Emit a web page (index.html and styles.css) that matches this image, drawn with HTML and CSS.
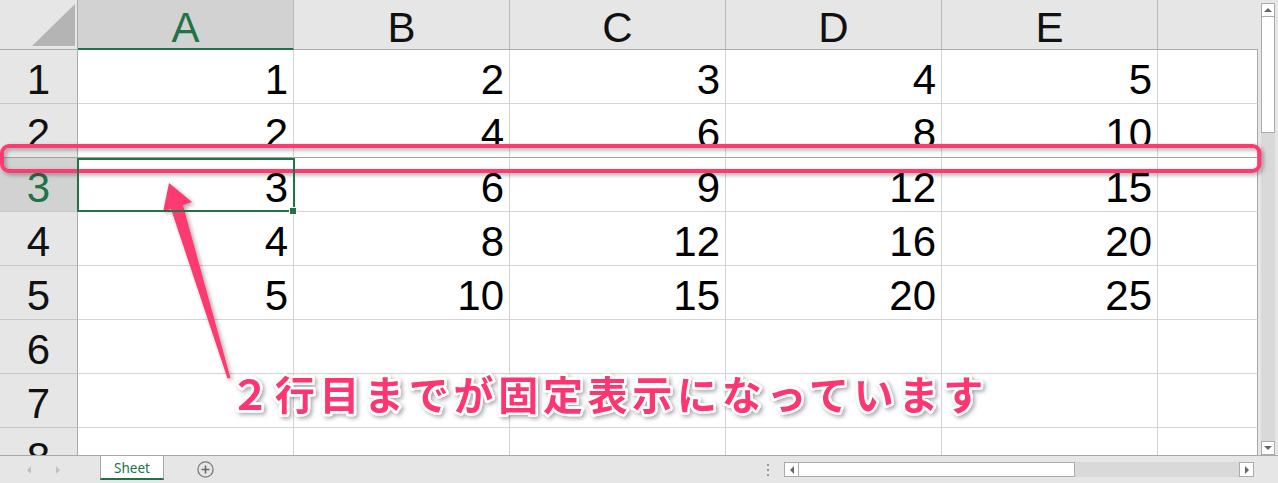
FILE: index.html
```html
<!DOCTYPE html>
<html lang="ja">
<head>
<meta charset="utf-8">
<title>Sheet</title>
<link rel="stylesheet" href="styles.css">
</head>
<body>
<div class="app">
  <div class="main">
    <div class="sheet">
      <div class="corner"><svg width="78" height="50" viewBox="0 0 78 50"><polygon points="32,46 75,46 75,4" fill="#b4b4b4"/></svg></div>
      <div class="ch sel">A</div>
      <div class="ch">B</div>
      <div class="ch">C</div>
      <div class="ch">D</div>
      <div class="ch">E</div>
      <div class="ch last"></div>

      <div class="rh">1</div>
      <div class="c">1</div><div class="c">2</div><div class="c">3</div><div class="c">4</div><div class="c">5</div><div class="c edge"></div>

      <div class="rh frz">2</div>
      <div class="c frz">2</div><div class="c frz">4</div><div class="c frz">6</div><div class="c frz">8</div><div class="c frz">10</div><div class="c edge frz"></div>

      <div class="rh sel">3</div>
      <div class="c active">3</div><div class="c">6</div><div class="c">9</div><div class="c">12</div><div class="c">15</div><div class="c edge"></div>

      <div class="rh">4</div>
      <div class="c">4</div><div class="c">8</div><div class="c">12</div><div class="c">16</div><div class="c">20</div><div class="c edge"></div>

      <div class="rh">5</div>
      <div class="c">5</div><div class="c">10</div><div class="c">15</div><div class="c">20</div><div class="c">25</div><div class="c edge"></div>

      <div class="rh">6</div>
      <div class="c"></div><div class="c"></div><div class="c"></div><div class="c"></div><div class="c"></div><div class="c edge"></div>

      <div class="rh">7</div>
      <div class="c"></div><div class="c"></div><div class="c"></div><div class="c"></div><div class="c"></div><div class="c edge"></div>

      <div class="rh">8</div>
      <div class="c"></div><div class="c"></div><div class="c"></div><div class="c"></div><div class="c"></div><div class="c edge"></div>
    </div>
    <div class="vscroll">
      <div class="vbtn"><span class="tri-up"></span></div>
      <div class="vthumb"></div>
      <div class="vtrack"></div>
      <div class="vbtn"><span class="tri-down"></span></div>
    </div>
  </div>
  <div class="tabbar">
    <div class="tabnav"><span class="nav-l"></span><span class="nav-r"></span></div>
    <div class="tab">Sheet</div>
    <div class="addsheet">
      <svg width="17" height="17" viewBox="0 0 17 17"><circle cx="8.5" cy="8.5" r="7.6" fill="none" stroke="#7a7a7a" stroke-width="1.3"/><path d="M8.5 4.5v8M4.5 8.5h8" stroke="#6a6a6a" stroke-width="1.6"/></svg>
    </div>
    <div class="spacer"></div>
    <div class="grip"><i></i><i></i><i></i></div>
    <div class="hscroll">
      <div class="hbtn"><span class="tri-left"></span></div>
      <div class="hthumb"></div>
      <div class="htrack"></div>
      <div class="hbtn"><span class="tri-right"></span></div>
    </div>
  </div>
</div>

<svg class="annot" width="1278" height="483" viewBox="0 0 1278 483">
  <defs>
    <filter id="sh" filterUnits="userSpaceOnUse" x="0" y="0" width="1278" height="483">
      <feDropShadow dx="2" dy="2" stdDeviation="2" flood-color="#000" flood-opacity="0.35"/>
    </filter>
  </defs>
  <rect class="frame" x="2" y="146" width="1257.5" height="25" rx="7" filter="url(#sh)"/>
  <polygon class="arrow" points="169,183 192,202 183,205.2 230.5,378 227.5,378.6 171,209 163,212" filter="url(#sh)"/>
  <text class="note" x="230" y="410" filter="url(#sh)">２行目までが固定表示になっています</text>
</svg>
</body>
</html>
```

FILE: styles.css
```css
* { box-sizing: border-box; }
html, body { margin: 0; padding: 0; }
body {
  width: 1278px;
  height: 483px;
  overflow: hidden;
  background: #e6e6e6;
  font-family: "Liberation Sans", Arial, sans-serif;
  position: relative;
}
.app { display: flex; flex-direction: column; height: 483px; }
.main { display: flex; height: 455px; }

.sheet {
  width: 1258px;
  height: 455px;
  overflow: hidden;
  background: #fff;
  display: grid;
  grid-template-columns: 78px repeat(5, 216px) 100px;
  grid-template-rows: 50px repeat(8, 54px);
}
.corner {
  background: #e6e6e6;
  border-right: 1px solid #ababab;
  border-bottom: 1px solid #ababab;
  overflow: hidden;
}
.corner svg { display: block; }
.ch {
  background: #e6e6e6;
  border-right: 1px solid #b9b9b9;
  border-bottom: 1px solid #ababab;
  font-size: 42px;
  line-height: 42px;
  padding-top: 7px;
  text-align: center;
  color: #111;
}
.ch.sel {
  background: #d2d2d2;
  color: #217346;
  border-bottom: 2px solid #217346;
}
.ch.last { border-right: none; }
.rh {
  background: #e6e6e6;
  border-right: 1px solid #ababab;
  border-bottom: 1px solid #c8c8c8;
  font-size: 42px;
  line-height: 42px;
  padding-top: 9px;
  text-align: center;
  color: #111;
}
.rh.sel { background: #d2d2d2; color: #217346; }
.c {
  border-right: 1px solid #d4d4d4;
  border-bottom: 1px solid #d4d4d4;
  font-size: 42px;
  line-height: 42px;
  padding: 9px 5px 0 0;
  text-align: right;
  color: #000;
}
.c.edge { border-right-color: #a8a8a8; }
.frz, .c.frz, .rh.frz { border-bottom-color: #a3a3a3; }
.c.active { position: relative; }
.c.active::before {
  content: "";
  position: absolute;
  left: -1px; top: 0; right: -2px; bottom: -1px;
  border: 2px solid #217346;
  z-index: 2;
}
.c.active::after {
  content: "";
  position: absolute;
  width: 6px; height: 6px;
  right: -4px; bottom: -4px;
  background: #217346;
  border: 1px solid #fff;
  z-index: 3;
}

.vscroll {
  width: 20px;
  height: 455px;
  background: #e6e6e6;
  display: flex;
  flex-direction: column;
  padding: 3px 3px 0 3px;
}
.vbtn {
  width: 14px; height: 14px;
  background: #fff;
  border: 1px solid #ababab;
  display: flex; align-items: center; justify-content: center;
  flex: none;
}
.vthumb {
  height: 116px;
  background: #fff;
  border: 1px solid #ababab;
  border-top: none;
  flex: none;
}
.vtrack { flex: 1; background: #d9d9d9; width: 14px; }
.tri-up { width: 0; height: 0; border-left: 4px solid transparent; border-right: 4px solid transparent; border-bottom: 4px solid #666; }
.tri-down { width: 0; height: 0; border-left: 4px solid transparent; border-right: 4px solid transparent; border-top: 4px solid #666; }
.tri-left { width: 0; height: 0; border-top: 4px solid transparent; border-bottom: 4px solid transparent; border-right: 4px solid #666; }
.tri-right { width: 0; height: 0; border-top: 4px solid transparent; border-bottom: 4px solid transparent; border-left: 4px solid #666; }

.tabbar {
  height: 28px;
  border-top: 1px solid #a8a8a8;
  background: #e6e6e6;
  display: flex;
  align-items: center;
}
.tabnav {
  width: 100px;
  display: flex;
  align-items: center;
  padding-left: 27px;
  gap: 25px;
}
.nav-l { width: 0; height: 0; border-top: 4px solid transparent; border-bottom: 4px solid transparent; border-right: 4px solid #c2c2c2; }
.nav-r { width: 0; height: 0; border-top: 4px solid transparent; border-bottom: 4px solid transparent; border-left: 4px solid #c2c2c2; }
.tab {
  align-self: flex-start;
  width: 64px;
  height: 24px;
  background: #fff;
  border-left: 1px solid #a8a8a8;
  border-right: 1px solid #a8a8a8;
  border-bottom: 2px solid #217346;
  color: #217346;
  font-family: "Noto Sans", "Open Sans", sans-serif;
  font-size: 13.5px;
  line-height: 24px;
  text-align: center;
}
.addsheet { margin-left: 33px; display: flex; }
.addsheet svg { display: block; }
.spacer { flex: 1; }
.grip { display: flex; flex-direction: column; gap: 3px; margin-right: 15px; }
.grip i { display: block; width: 2px; height: 2px; background: #9a9a9a; }
.hscroll {
  width: 470px;
  height: 15px;
  margin-right: 24px;
  display: flex;
}
.hbtn {
  width: 15px; height: 15px;
  background: #fff;
  border: 1px solid #ababab;
  display: flex; align-items: center; justify-content: center;
  flex: none;
}
.hthumb {
  width: 276px;
  background: #fff;
  border: 1px solid #ababab;
  border-left: none;
  flex: none;
}
.htrack { flex: 1; background: #d9d9d9; }

.annot {
  position: absolute;
  top: 0; left: 0;
  pointer-events: none;
}
.frame { fill: none; stroke: #fd3a6f; stroke-width: 4px; }
.arrow { fill: #fd3a6f; }
.note {
  font-family: "Noto Sans CJK JP", sans-serif;
  font-size: 40px;
  font-weight: 700;
  letter-spacing: 4.7px;
  fill: #fd3570;
  stroke: #fff;
  stroke-width: 5px;
  stroke-linejoin: round;
  paint-order: stroke;
}
```
